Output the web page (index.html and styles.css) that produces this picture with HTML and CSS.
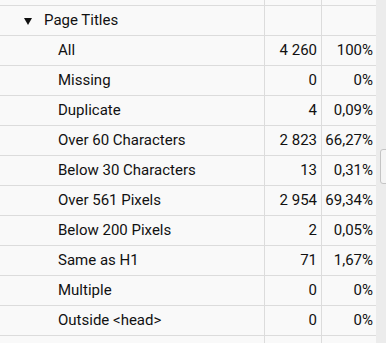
FILE: index.html
```html
<!DOCTYPE html>
<html>
<head>
<meta charset="utf-8">
<link rel="stylesheet" href="styles.css">
</head>
<body>
<div class="view">
  <div class="table">
    <div class="row spacer"><div class="c1"></div><div class="c2"></div><div class="c3"></div></div>
    <div class="row"><div class="c1 group"><span class="tri"></span>Page Titles</div><div class="c2"></div><div class="c3"></div></div>
    <div class="row"><div class="c1 item">All</div><div class="c2">4 260</div><div class="c3">100%</div></div>
    <div class="row"><div class="c1 item">Missing</div><div class="c2">0</div><div class="c3">0%</div></div>
    <div class="row"><div class="c1 item">Duplicate</div><div class="c2">4</div><div class="c3">0,09%</div></div>
    <div class="row"><div class="c1 item">Over 60 Characters</div><div class="c2">2 823</div><div class="c3">66,27%</div></div>
    <div class="row"><div class="c1 item">Below 30 Characters</div><div class="c2">13</div><div class="c3">0,31%</div></div>
    <div class="row"><div class="c1 item">Over 561 Pixels</div><div class="c2">2 954</div><div class="c3">69,34%</div></div>
    <div class="row"><div class="c1 item">Below 200 Pixels</div><div class="c2">2</div><div class="c3">0,05%</div></div>
    <div class="row"><div class="c1 item">Same as H1</div><div class="c2">71</div><div class="c3">1,67%</div></div>
    <div class="row"><div class="c1 item">Multiple</div><div class="c2">0</div><div class="c3">0%</div></div>
    <div class="row"><div class="c1 item">Outside &lt;head&gt;</div><div class="c2">0</div><div class="c3">0%</div></div>
    <div class="row"><div class="c1"></div><div class="c2"></div><div class="c3"></div></div>
  </div>
  <div class="track"><div class="thumb"></div></div>
</div>
</body>
</html>
```
FILE: styles.css
```css
html, body {
  margin: 0;
  padding: 0;
  background: #f9f9f9;
}
body {
  font-family: Roboto, "Liberation Sans", sans-serif;
  font-size: 15px;
  color: #111;
  overflow: hidden;
}
.view {
  display: flex;
  width: 386px;
  height: 343px;
  overflow: hidden;
}
.table {
  width: 376px;
  flex: none;
  background: #f9f9f9;
}
.row {
  display: grid;
  grid-template-columns: 265px 57px 54px;
  height: 30px;
  border-bottom: 1px solid #dcdcdc;
  box-sizing: border-box;
}
.row.spacer {
  height: 6px;
}
.row > div {
  display: flex;
  align-items: center;
  white-space: nowrap;
  line-height: 29px;
}
.c1 {
  border-right: 1px solid #dcdcdc;
}
.c2 {
  border-right: 1px solid #dcdcdc;
  justify-content: flex-end;
  padding-right: 4px;
}
.c3 {
  justify-content: flex-end;
  padding-right: 3px;
}
.group {
  padding-left: 24px;
}
.item {
  padding-left: 58px;
}
.tri {
  width: 0;
  height: 0;
  border-left: 4px solid transparent;
  border-right: 4px solid transparent;
  border-top: 7px solid #111;
  margin-right: 12px;
  margin-top: 1px;
}
.track {
  width: 10px;
  flex: none;
  background: #ececec;
}
.thumb {
  margin-top: 149px;
  margin-left: 4px;
  width: 10px;
  height: 35px;
  box-sizing: border-box;
  border: 1px solid #c4c4c4;
  border-radius: 3px;
  background: #f4f4f4;
}
```
